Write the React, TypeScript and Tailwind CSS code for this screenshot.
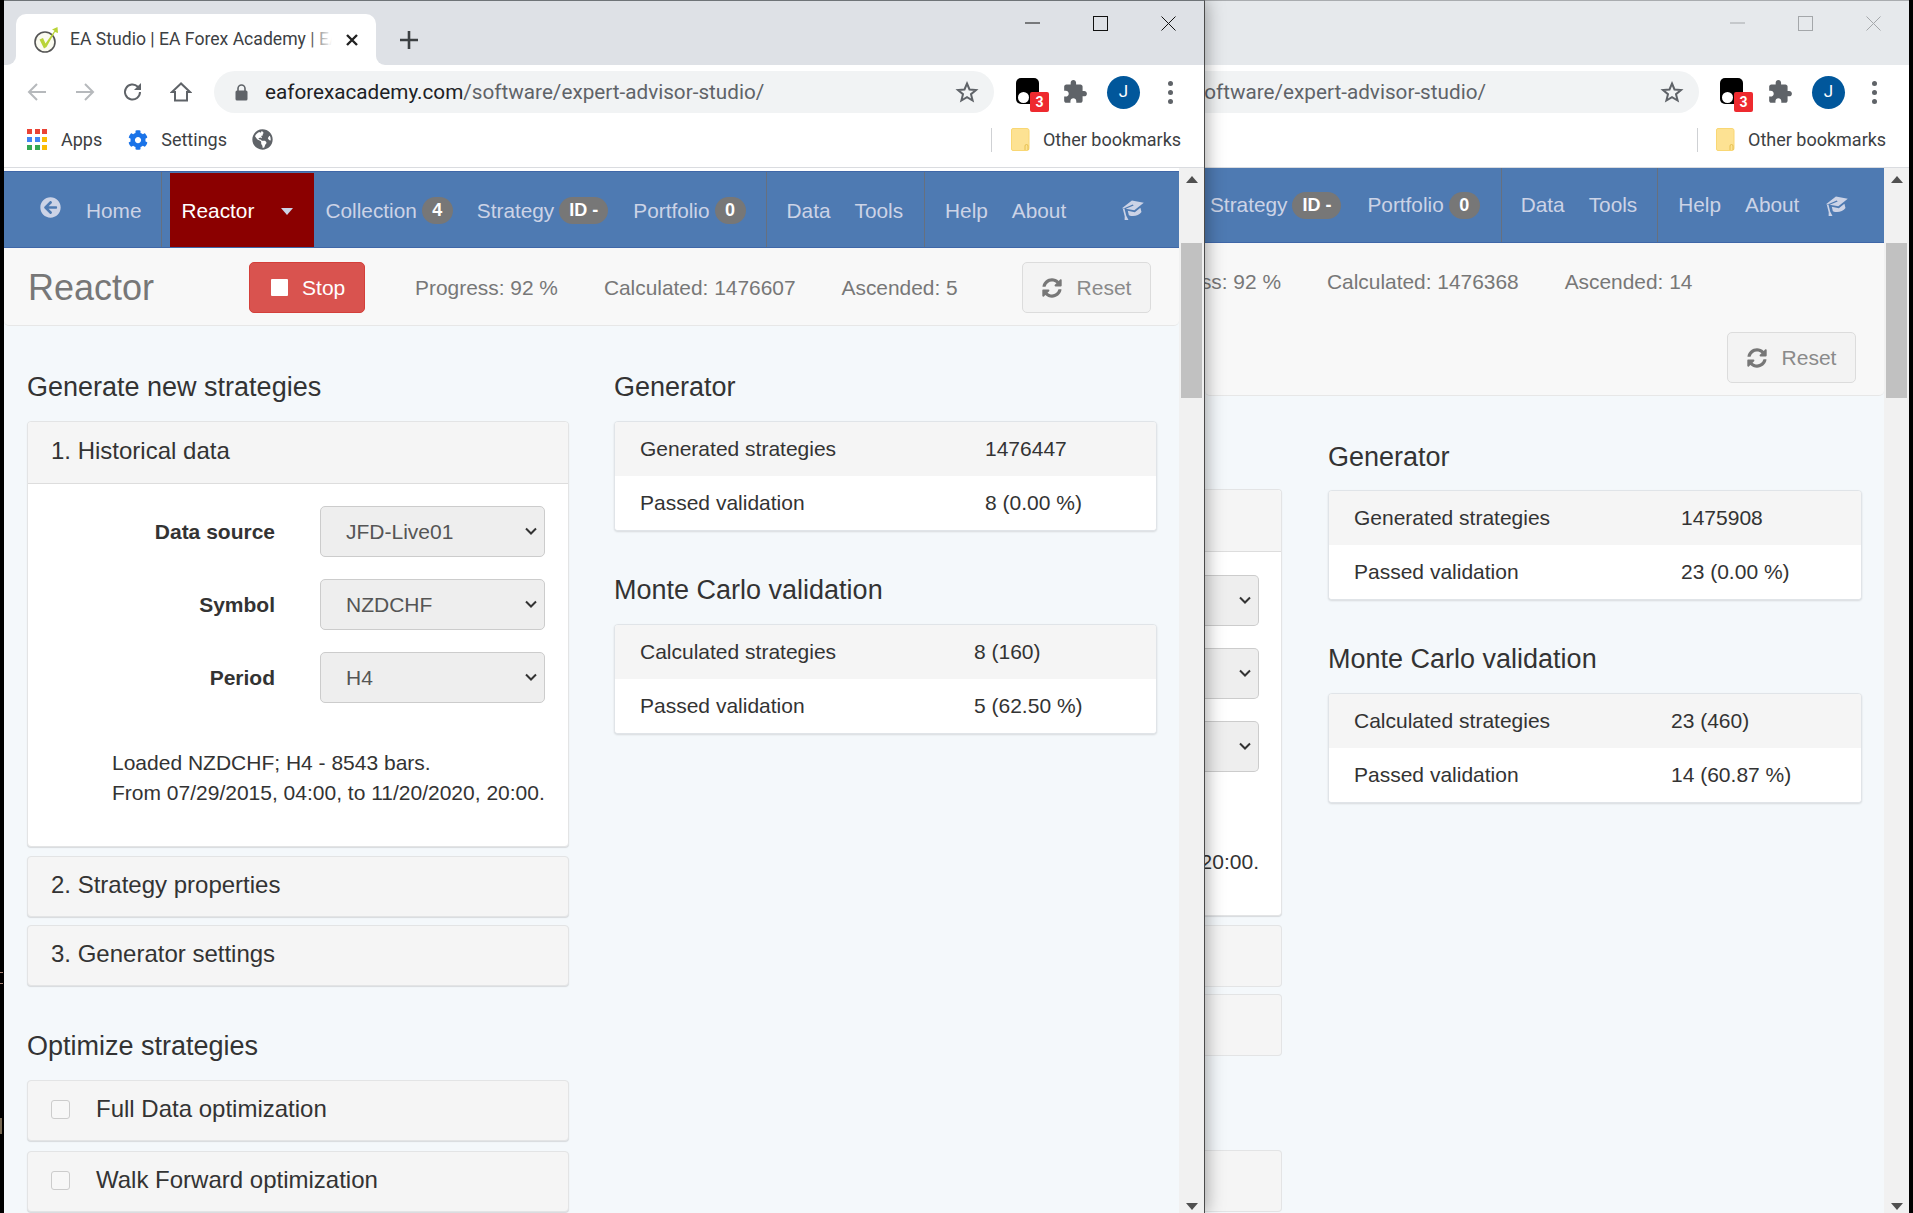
import React from "react";
import { FaCog, FaGlobeAmericas, FaArrowCircleLeft, FaSyncAlt } from "react-icons/fa";

const ui = "[font-family:Roboto,sans-serif]";

function Chevron() {
  return (
    <svg width="14" height="9" viewBox="0 0 14 9" className="shrink-0">
      <path d="M2 1.5 7 6.5 12 1.5" fill="none" stroke="#333" strokeWidth="2" />
    </svg>
  );
}

function Cap({ className = "" }: { className?: string }) {
  return (
    <svg width="24" height="21" viewBox="0 0 24 21" className={className}>
      <g transform="rotate(-14 12 10)" fill="#ccd3e6">
        <path d="M13 1.5 24 6.5 13 11.5 5 8 13.5 6.8 12.8 5.6 3 7.2 1.5 6.5z" />
        <path d="M6.5 10.5 13 13.5 19.5 10.5V15C16 18 10 18 6.5 15z" />
        <path d="M2.2 7.5h1.6v7.5l1.2 4.5H1l1.2-4.5z" />
      </g>
    </svg>
  );
}

function Ctl({ faded }: { faded?: boolean }) {
  const c = faded ? "#a4a7aa" : "#111";
  return (
    <div className="flex items-center gap-[53px] mt-[15px] self-start">
      <svg width="15" height="15" viewBox="0 0 15 15"><path d="M0 7h15" stroke={c} strokeWidth="1" /></svg>
      <svg width="15" height="15" viewBox="0 0 15 15"><rect x="0.5" y="0.5" width="14" height="14" fill="none" stroke={c} /></svg>
      <svg width="15" height="15" viewBox="0 0 15 15"><path d="M.5.5l14 14M14.5.5l-14 14" stroke={c} /></svg>
    </div>
  );
}

function Star() {
  return (
    <svg width="24" height="24" viewBox="0 0 24 24">
      <path d="M12 3.5l2.5 6 6.5.5-5 4.2 1.6 6.3L12 17.2l-5.6 3.3L8 14.2 3 10l6.5-.5z" fill="none" stroke="#5f6368" strokeWidth="2" strokeLinejoin="miter" />
    </svg>
  );
}

function Ext() {
  return (
    <div className="relative w-[25px] h-[30px]">
      <div className="absolute left-0 top-[1px] w-[23px] h-[26px] bg-black rounded-[5px]" />
      <div className="absolute left-[2px] top-[15px] w-[11px] h-[11px] bg-white rounded-full" />
      <div className="absolute left-[14px] top-[15px] w-[19px] h-[20px] bg-[#ee2a2f] rounded-[2px] flex items-center justify-center text-white text-[14px] font-bold">3</div>
    </div>
  );
}

function Puzzle() {
  return (
    <svg width="26" height="26" viewBox="0 0 24 24">
      <path fill="#5f6368" d="M20.5 11H19V7c0-1.1-.9-2-2-2h-4V3.5C13 2.12 11.88 1 10.5 1S8 2.12 8 3.5V5H4c-1.1 0-1.99.9-1.99 2v3.8H3.5c1.49 0 2.7 1.21 2.7 2.7s-1.21 2.7-2.7 2.7H2V20c0 1.1.9 2 2 2h3.8v-1.5c0-1.49 1.21-2.7 2.7-2.7 1.49 0 2.7 1.21 2.7 2.7V22H17c1.1 0 2-.9 2-2v-4h1.5c1.38 0 2.5-1.12 2.5-2.5S21.88 11 20.5 11z" />
    </svg>
  );
}

function Avatar() {
  return <div className={`w-[33px] h-[33px] rounded-full bg-[#01579b] text-white text-[17px] flex items-center justify-center ${ui}`}>J</div>;
}

function Dots() {
  return (
    <div className="flex flex-col gap-[4px]">
      <div className="w-[5px] h-[5px] rounded-full bg-[#5f6368]" />
      <div className="w-[5px] h-[5px] rounded-full bg-[#5f6368]" />
      <div className="w-[5px] h-[5px] rounded-full bg-[#5f6368]" />
    </div>
  );
}

function Folder() {
  return (
    <svg width="19" height="23" viewBox="0 0 19 23">
      <path d="M2 .5h14a2 2 0 0 1 2 2v18a2 2 0 0 1-2 2H2a1.5 1.5 0 0 1-1.5-1.5V2A1.5 1.5 0 0 1 2 .5z" fill="#fde293" stroke="#f9d774" />
      <path d="M14 22v-4a1.5 1.5 0 0 1 3 0v4" fill="none" stroke="#e6c04f" />
    </svg>
  );
}

function AppsGrid() {
  const cols = ["#ea4335", "#ea4335", "#ea4335", "#4285f4", "#4285f4", "#fbbc04", "#34a853", "#34a853", "#fbbc04"];
  return (
    <div className="grid grid-cols-3 gap-[3px] w-[20px]">
      {cols.map((c, i) => (
        <div key={i} className="h-[5px] w-[5px]" style={{ background: c }} />
      ))}
    </div>
  );
}

function Favicon() {
  return (
    <svg width="25" height="26" viewBox="0 0 25 26" className="shrink-0">
      <circle cx="11" cy="15" r="10" fill="#fbfbf0" stroke="#555" strokeWidth="1.6" />
      <path d="M5.5 12.5 10 21.5 12.5 20 21 5 24 6 23.5 0 18 2.5 20.5 3.8 11.5 16.5 9 11z" fill="#b9d437" />
    </svg>
  );
}

function NavText({ children, className = "" }: { children: React.ReactNode; className?: string }) {
  return <span className={`text-[20.8px] text-[#ccd3e6] leading-none whitespace-nowrap ${className}`}>{children}</span>;
}

function Badge({ children, className = "" }: { children: React.ReactNode; className?: string }) {
  return (
    <span className={`h-[27px] rounded-full bg-[#777] text-white text-[18px] font-bold flex items-center justify-center ${className}`}>{children}</span>
  );
}

function Sep({ className = "" }: { className?: string }) {
  return <div className={`w-[1px] self-stretch bg-[#66707f] ${className}`} />;
}

function ScrollBar() {
  return (
    <div className="w-[25px] shrink-0 bg-[#f1f1f1] flex flex-col px-[2px]">
      <div className="h-[75px] flex justify-center pt-[8px]">
        <svg width="12" height="8" viewBox="0 0 12 8"><path d="M6 0l6 7H0z" fill="#505050" /></svg>
      </div>
      <div className="h-[155px] bg-[#c1c1c1]" />
      <div className="flex-1 flex justify-center items-end pb-[2px]">
        <svg width="12" height="8" viewBox="0 0 12 8"><path d="M6 7L0 0h12z" fill="#505050" /></svg>
      </div>
    </div>
  );
}

function ResetBtn() {
  return (
    <div className="w-[129px] h-[51px] shrink-0 rounded-[5px] bg-[#f3f3f3] border border-[#dcdcdc] flex items-center justify-center gap-[15px] text-[21px] text-[#8a8a8a]">
      <FaSyncAlt className="text-[20px] text-[#777]" />
      <span>Reset</span>
    </div>
  );
}

function Heading({ children, className = "" }: { children: React.ReactNode; className?: string }) {
  return <h3 className={`text-[27px] leading-[30px] text-[#333] font-normal whitespace-nowrap ${className}`}>{children}</h3>;
}

function StatTable({ rows, col }: { rows: [string, string][]; col: string }) {
  return (
    <div className="rounded-[4px] border border-[#e0e4e8] bg-white shadow-[0_1px_2px_rgba(0,0,0,0.12)] overflow-hidden text-[21px] text-[#333]">
      {rows.map(([a, b], i) => (
        <div key={i} className={`h-[54px] flex items-center ${i === 0 ? "bg-[#f5f5f5]" : "bg-white"}`}>
          <div className={`pl-[25px] shrink-0 whitespace-nowrap ${col}`}>{a}</div>
          <div className="whitespace-nowrap">{b}</div>
        </div>
      ))}
    </div>
  );
}

function Panel({ title, check, className = "" }: { title: string; check?: boolean; className?: string }) {
  return (
    <div className={`h-[61px] rounded-[4px] bg-[#f5f5f5] border border-[#e3e4e5] shadow-[0_1px_1px_rgba(0,0,0,0.12)] flex items-center pl-[23px] text-[24px] text-[#333] ${className}`}>
      {check && <div className="w-[19px] h-[19px] rounded-[3px] border border-[#ccc] bg-[#f7f7f7] mr-[26px] -mt-[3px]" />}
      <span className="whitespace-nowrap -mt-[3px]">{title}</span>
    </div>
  );
}

function SelectRow({ label, value }: { label: string; value: string }) {
  return (
    <div className="flex items-center h-[51px]">
      <div className="w-[247px] shrink-0 text-right font-bold text-[21px] text-[#333]">{label}</div>
      <div className="ml-[45px] w-[225px] h-[51px] rounded-[5px] bg-[#eee] border border-[#ccc] flex items-center justify-between pl-[25px] pr-[6px] text-[21px] text-[#555]">
        <span>{value}</span>
        <Chevron />
      </div>
    </div>
  );
}

function FrontWindow() {
  return (
    <div className="absolute left-[4px] top-0 w-[1201px] h-[1213px] z-10 flex flex-col bg-white overflow-hidden border-t border-[#6f7478] border-r-[1px] border-r-[#4b4b4b] [font-family:Liberation_Sans,sans-serif]">
      {/* tab strip */}
      <div className="h-[64px] shrink-0 bg-[#dee1e6] flex items-end pl-[12px] pr-[28px]">
        <div className={`relative w-[360px] h-[51px] bg-white rounded-t-[10px] flex items-center pl-[18px] ${ui}`}>
          <div className="absolute -left-[9px] bottom-0 w-[9px] h-[9px] bg-white">
            <div className="w-full h-full bg-[#dee1e6] rounded-br-[9px]" />
          </div>
          <div className="absolute -right-[9px] bottom-0 w-[9px] h-[9px] bg-white">
            <div className="w-full h-full bg-[#dee1e6] rounded-bl-[9px]" />
          </div>
          <Favicon />
          <div className="relative ml-[11px] w-[262px] overflow-hidden">
            <div className="text-[17.6px] text-[#3c4043] whitespace-nowrap">EA Studio | EA Forex Academy | EA Studio</div>
            <div className="absolute right-0 top-0 bottom-0 w-[24px] bg-gradient-to-r from-transparent to-white" />
          </div>
          <svg width="14" height="14" viewBox="0 0 14 14" className="ml-[13px]"><path d="M2 2l10 10M12 2L2 12" stroke="#222" strokeWidth="2.4" /></svg>
        </div>
        <svg width="18" height="18" viewBox="0 0 18 18" className="ml-[24px] mb-[16px]"><path d="M9 0v18M0 9h18" stroke="#3c4043" strokeWidth="2.6" /></svg>
        <div className="ml-auto self-stretch flex"><Ctl /></div>
      </div>
      {/* toolbar */}
      <div className={`h-[54px] shrink-0 flex items-center pl-[23px] ${ui}`}>
        <svg width="20" height="20" viewBox="0 0 20 20"><path d="M19 10H2M10 2l-8 8 8 8" fill="none" stroke="#b6b9bc" strokeWidth="2" /></svg>
        <svg width="20" height="20" viewBox="0 0 20 20" className="ml-[28px]"><path d="M1 10h17M10 2l8 8-8 8" fill="none" stroke="#b6b9bc" strokeWidth="2" /></svg>
        <svg width="22" height="22" viewBox="0 0 22 22" className="ml-[27px]"><path d="M18 11a7.5 7.5 0 1 1-2.2-5.3L18 8" fill="none" stroke="#5f6368" strokeWidth="2" /><path d="M19 2v7h-7z" fill="#5f6368" /></svg>
        <svg width="22" height="22" viewBox="0 0 22 22" className="ml-[26px]"><path d="M11 2.5L2 11h3v8.5h12V11h3z" fill="none" stroke="#5f6368" strokeWidth="2" /></svg>
        <div className="ml-[22px] w-[780px] h-[42px] rounded-full bg-[#f1f3f4] flex items-center pl-[21px] pr-[15px]">
          <svg width="13" height="17" viewBox="0 0 13 17" className="shrink-0"><path d="M3 7V4.5a3.5 3.5 0 0 1 7 0V7" fill="none" stroke="#5f6368" strokeWidth="1.6" /><rect x="0.5" y="6.5" width="12" height="10" rx="1.5" fill="#5f6368" /></svg>
          <span className="ml-[17px] mt-[1px] text-[20.7px] text-[#202124] whitespace-nowrap">eaforexacademy.com<span className="text-[#5f6368]">/software/expert-advisor-studio/</span></span>
          <div className="ml-auto"><Star /></div>
        </div>
        <div className="ml-[22px]"><Ext /></div>
        <div className="ml-[21px]"><Puzzle /></div>
        <div className="ml-[19px]"><Avatar /></div>
        <div className="ml-[28px]"><Dots /></div>
      </div>
      {/* bookmarks */}
      <div className={`h-[49px] shrink-0 flex items-center pl-[23px] pb-[7px] border-b border-[#dadce0] text-[18px] text-[#3c4043] ${ui}`}>
        <AppsGrid />
        <span className="ml-[14px]">Apps</span>
        <FaCog className="ml-[26px] text-[20px] text-[#1a73e8]" />
        <span className="ml-[13px]">Settings</span>
        <FaGlobeAmericas className="ml-[25px] text-[21px] text-[#5f6368]" />
        <div className="ml-[718px] w-[1px] h-[24px] bg-[#cfd1d4]" />
        <div className="ml-[19px]"><Folder /></div>
        <span className="ml-[13px] whitespace-nowrap">Other bookmarks</span>
      </div>
      <div className="flex-1 flex min-h-0">
        <div className="flex-1 min-w-0 border-t-[3px] border-white bg-[#f4f8fb] overflow-hidden">
          {/* nav */}
          <div className="h-[77px] bg-[#4e7ab2] border-y border-[#3f67a8] flex items-center">
            <FaArrowCircleLeft className="ml-[36px] text-[21px] text-[#ccd3e6] -mt-[4px]" />
            <NavText className="ml-[25px] mt-[3px]">Home</NavText>
            <Sep className="ml-[20px]" />
            <div className="ml-[8px] w-[144px] self-stretch bg-[#8b0000] flex items-center pl-[11px] mt-[1px]">
              <span className="text-[20.8px] text-white mt-[2px]">Reactor</span>
              <svg width="12" height="7" viewBox="0 0 12 7" className="ml-[27px] mt-[2px]"><path d="M0 0h12L6 7z" fill="#ccd3e6" /></svg>
            </div>
            <NavText className="ml-[11px] mt-[3px]">Collection</NavText>
            <Badge className="ml-[5px] w-[31px] mt-[2px]">4</Badge>
            <NavText className="ml-[24px] mt-[3px]">Strategy</NavText>
            <Badge className="ml-[5px] w-[49px] mt-[2px]">ID -</Badge>
            <NavText className="ml-[25px] mt-[3px]">Portfolio</NavText>
            <Badge className="ml-[5px] w-[31px] mt-[2px]">0</Badge>
            <Sep className="ml-[20px]" />
            <NavText className="ml-[20px] mt-[3px]">Data</NavText>
            <NavText className="ml-[24px] mt-[3px]">Tools</NavText>
            <Sep className="ml-[21px]" />
            <NavText className="ml-[20px] mt-[3px]">Help</NavText>
            <NavText className="ml-[24px] mt-[3px]">About</NavText>
            <Cap className="ml-[55px]" />
          </div>
          {/* sub header */}
          <div className="h-[78px] bg-[#f8f8f8] border-b border-[#e7e7e7] rounded-b-[5px] flex items-center pl-[24px] pr-[28px] pt-[2px]">
            <span className="text-[36px] text-[#777]">Reactor</span>
            <div className="ml-[95px] w-[116px] h-[51px] rounded-[5px] bg-[#d9534f] border border-[#d43f3a] flex items-center pl-[21px] text-white text-[21px]">
              <div className="w-[17px] h-[17px] bg-white rounded-[1px]" />
              <span className="ml-[14px]">Stop</span>
            </div>
            <span className="ml-[50px] text-[20.9px] text-[#777]">Progress: 92 %</span>
            <span className="ml-[46px] text-[20.9px] text-[#777]">Calculated: 1476607</span>
            <span className="ml-[46px] text-[20.9px] text-[#777]">Ascended: 5</span>
            <div className="ml-auto"><ResetBtn /></div>
          </div>
          {/* content */}
          <div className="flex pl-[23px] pt-[46px]">
            <div className="w-[542px] shrink-0">
              <Heading className="mb-[19px]">Generate new strategies</Heading>
              <div className="rounded-[4px] border border-[#e3e4e5] bg-white shadow-[0_1px_1px_rgba(0,0,0,0.12)]">
                <div className="h-[62px] bg-[#f5f5f5] border-b border-[#ddd] rounded-t-[4px] flex items-center pl-[23px] text-[24px] text-[#333]">
                  <span className="-mt-[3px]">1. Historical data</span>
                </div>
                <div className="pt-[22px] h-[362px]">
                  <div className="flex flex-col gap-[22px]">
                    <SelectRow label="Data source" value="JFD-Live01" />
                    <SelectRow label="Symbol" value="NZDCHF" />
                    <SelectRow label="Period" value="H4" />
                  </div>
                  <div className="mt-[45px] pl-[84px] text-[21px] leading-[30px] text-[#333] whitespace-nowrap">
                    <div>Loaded NZDCHF; H4 - 8543 bars.</div>
                    <div>From 07/29/2015, 04:00, to 11/20/2020, 20:00.</div>
                  </div>
                </div>
              </div>
              <Panel title="2. Strategy properties" className="mt-[9px]" />
              <Panel title="3. Generator settings" className="mt-[8px]" />
              <Heading className="mt-[45px] mb-[19px]">Optimize strategies</Heading>
              <Panel title="Full Data optimization" check />
              <Panel title="Walk Forward optimization" check className="mt-[10px]" />
            </div>
            <div className="ml-[45px] w-[543px] shrink-0">
              <Heading className="mb-[19px]">Generator</Heading>
              <StatTable col="w-[370px]" rows={[["Generated strategies", "1476447"], ["Passed validation", "8 (0.00 %)"]]} />
              <Heading className="mt-[44px] mb-[19px]">Monte Carlo validation</Heading>
              <StatTable col="w-[359px]" rows={[["Calculated strategies", "8 (160)"], ["Passed validation", "5 (62.50 %)"]]} />
            </div>
          </div>
        </div>
        <ScrollBar />
      </div>
    </div>
  );
}

function BackSelect() {
  return (
    <div className="w-[54px] h-[51px] rounded-r-[5px] bg-[#eee] border-y border-r border-[#ccc] flex items-center justify-end pr-[6px]">
      <Chevron />
    </div>
  );
}

function BackWindow() {
  return (
    <div className="absolute left-[1205px] top-0 w-[704px] h-[1213px] flex flex-col bg-white overflow-hidden border-t border-[#a9acaf] [font-family:Liberation_Sans,sans-serif]">
      <div className="h-[64px] shrink-0 bg-[#e6e9ec] flex justify-end pr-[28px]">
        <Ctl faded />
      </div>
      <div className={`h-[54px] shrink-0 flex items-center ${ui}`}>
        <div className="w-[494px] h-[42px] shrink-0 rounded-r-full bg-[#f1f3f4] flex items-center pr-[15px] overflow-hidden">
          <div className="w-[281px] flex justify-end overflow-hidden shrink-0 mt-[1px]">
            <span className="text-[20.7px] text-[#5f6368] whitespace-nowrap">oftware/expert-advisor-studio/</span>
          </div>
          <div className="ml-auto"><Star /></div>
        </div>
        <div className="ml-[21px]"><Ext /></div>
        <div className="ml-[22px]"><Puzzle /></div>
        <div className="ml-[19px]"><Avatar /></div>
        <div className="ml-[27px]"><Dots /></div>
      </div>
      <div className={`h-[49px] shrink-0 flex items-center pb-[7px] border-b border-[#dadce0] text-[18px] text-[#3c4043] ${ui}`}>
        <div className="ml-[492px] w-[1px] h-[24px] bg-[#cfd1d4]" />
        <div className="ml-[18px]"><Folder /></div>
        <span className="ml-[13px] whitespace-nowrap">Other bookmarks</span>
      </div>
      <div className="flex-1 flex min-h-0">
        <div className="flex-1 min-w-0 bg-[#f4f8fb] overflow-hidden">
          <div className="h-[75px] bg-[#4e7ab2] border-b border-[#3f67a8] flex items-center pl-[5px]">
            <NavText>Strategy</NavText>
            <Badge className="ml-[5px] w-[49px]">ID -</Badge>
            <NavText className="ml-[26px]">Portfolio</NavText>
            <Badge className="ml-[5px] w-[31px]">0</Badge>
            <Sep className="ml-[21px]" />
            <NavText className="ml-[19px]">Data</NavText>
            <NavText className="ml-[24px]">Tools</NavText>
            <Sep className="ml-[20px]" />
            <NavText className="ml-[20px]">Help</NavText>
            <NavText className="ml-[24px]">About</NavText>
            <Cap className="ml-[26px]" />
          </div>
          <div className="h-[153px] bg-[#f8f8f8] border-b border-[#e7e7e7] rounded-b-[5px] pt-[26px]">
            <div className="flex items-center h-[26px]">
              <div className="w-[76px] shrink-0 flex justify-end overflow-hidden">
                <span className="text-[20.9px] text-[#777] whitespace-nowrap">ss: 92 %</span>
              </div>
              <span className="ml-[46px] text-[20.9px] text-[#777] whitespace-nowrap">Calculated: 1476368</span>
              <span className="ml-[46px] text-[20.9px] text-[#777] whitespace-nowrap">Ascended: 14</span>
            </div>
            <div className="ml-[522px] mt-[37px]"><ResetBtn /></div>
          </div>
          <div className="flex pt-[46px]">
            <div className="w-[77px] shrink-0">
              <div className="mt-[47px] rounded-r-[4px] border-y border-r border-[#e3e4e5] bg-white shadow-[0_1px_1px_rgba(0,0,0,0.12)]">
                <div className="h-[62px] bg-[#f5f5f5] border-b border-[#ddd] rounded-tr-[4px]" />
                <div className="pt-[23px] h-[363px]">
                  <div className="flex flex-col gap-[22px]">
                    <BackSelect />
                    <BackSelect />
                    <BackSelect />
                  </div>
                  <div className="mt-[75px] w-[54px] flex justify-end overflow-hidden text-[21px] leading-[30px] text-[#333]">
                    <span className="whitespace-nowrap">20:00.</span>
                  </div>
                </div>
              </div>
              <div className="h-[62px] mt-[9px] rounded-r-[4px] bg-[#f5f5f5] border-y border-r border-[#e3e4e5]" />
              <div className="h-[62px] mt-[7px] rounded-r-[4px] bg-[#f5f5f5] border-y border-r border-[#e3e4e5]" />
              <div className="h-[62px] mt-[94px] rounded-r-[4px] bg-[#f5f5f5] border-y border-r border-[#e3e4e5]" />
            </div>
            <div className="ml-[46px] w-[534px] shrink-0">
              <Heading className="mb-[18px]">Generator</Heading>
              <StatTable col="w-[352px]" rows={[["Generated strategies", "1475908"], ["Passed validation", "23 (0.00 %)"]]} />
              <Heading className="mt-[44px] mb-[19px]">Monte Carlo validation</Heading>
              <StatTable col="w-[342px]" rows={[["Calculated strategies", "23 (460)"], ["Passed validation", "14 (60.87 %)"]]} />
            </div>
          </div>
        </div>
        <ScrollBar />
      </div>
    </div>
  );
}

export default function App() {
  return (
    <div className="relative w-[1913px] h-[1213px] bg-black overflow-hidden">
      <div className="absolute left-0 top-[972px] w-[3px] h-[12px] border-y border-[#c9a08f]" />
      <div className="absolute left-0 top-[1118px] w-[2px] h-[16px] bg-[#8a7a60]" />
      <BackWindow />
      <div className="absolute left-[4px] top-0 w-[1201px] h-[1213px] z-[5] shadow-[0_0_18px_rgba(0,0,0,0.4)]" />
      <FrontWindow />
    </div>
  );
}
